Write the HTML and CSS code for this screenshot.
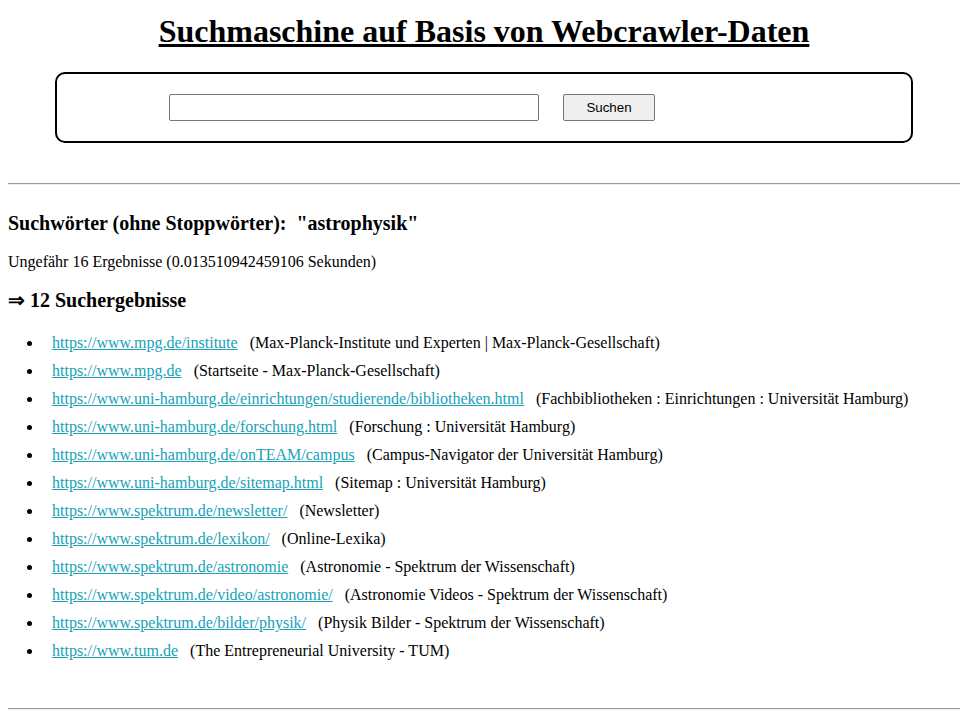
FILE: index.html
```html
<!DOCTYPE html>
<html lang="de">
<head>
<meta charset="utf-8">
<title>Suchmaschine</title>
<link rel="stylesheet" href="styles.css">
</head>
<body>
<h1 class="title">Suchmaschine auf Basis von Webcrawler-Daten</h1>
<form class="search-box">
  <input class="search-input" type="text">
  <button class="search-btn" type="button">Suchen</button>
</form>
<hr class="rule rule-top">
<h3 class="heading heading-first">Suchwörter (ohne Stoppwörter):&nbsp; "astrophysik"</h3>
<p class="stats">Ungefähr 16 Ergebnisse (0.013510942459106 Sekunden)</p>
<h3 class="heading">⇒ 12 Suchergebnisse</h3>
<ul class="results">
  <li><a href="#">https://www.mpg.de/institute</a>&nbsp;&nbsp; (Max-Planck-Institute und Experten | Max-Planck-Gesellschaft)</li>
  <li><a href="#">https://www.mpg.de</a>&nbsp;&nbsp; (Startseite - Max-Planck-Gesellschaft)</li>
  <li><a href="#">https://www.uni-hamburg.de/einrichtungen/studierende/bibliotheken.html</a>&nbsp;&nbsp; (Fachbibliotheken : Einrichtungen : Universität Hamburg)</li>
  <li><a href="#">https://www.uni-hamburg.de/forschung.html</a>&nbsp;&nbsp; (Forschung : Universität Hamburg)</li>
  <li><a href="#">https://www.uni-hamburg.de/onTEAM/campus</a>&nbsp;&nbsp; (Campus-Navigator der Universität Hamburg)</li>
  <li><a href="#">https://www.uni-hamburg.de/sitemap.html</a>&nbsp;&nbsp; (Sitemap : Universität Hamburg)</li>
  <li><a href="#">https://www.spektrum.de/newsletter/</a>&nbsp;&nbsp; (Newsletter)</li>
  <li><a href="#">https://www.spektrum.de/lexikon/</a>&nbsp;&nbsp; (Online-Lexika)</li>
  <li><a href="#">https://www.spektrum.de/astronomie</a>&nbsp;&nbsp; (Astronomie - Spektrum der Wissenschaft)</li>
  <li><a href="#">https://www.spektrum.de/video/astronomie/</a>&nbsp;&nbsp; (Astronomie Videos - Spektrum der Wissenschaft)</li>
  <li><a href="#">https://www.spektrum.de/bilder/physik/</a>&nbsp;&nbsp; (Physik Bilder - Spektrum der Wissenschaft)</li>
  <li><a href="#">https://www.tum.de</a>&nbsp;&nbsp; (The Entrepreneurial University - TUM)</li>
</ul>
<hr class="rule rule-bottom">
</body>
</html>
```
FILE: styles.css
```css
body {
  margin: 8px 4px 8px 8px;
  font-family: "Liberation Serif", "Times New Roman", serif;
  font-size: 16px;
  color: #000;
  background: #fff;
}
.title {
  margin: 5px 0 0 0;
  text-align: center;
  font-size: 32px;
  font-weight: bold;
  text-decoration: underline;
  line-height: 37px;
}
.search-box {
  display: flex;
  align-items: center;
  gap: 24px;
  margin: 22px 47px 0 47px;
  padding: 20px 20px 20px 112px;
  border: 2px solid #000;
  border-radius: 10px;
}
.search-input {
  width: 370px;
  height: 27px;
  box-sizing: border-box;
  border: 1px solid #767676;
  border-radius: 2px;
  margin: 0;
  padding: 1px 2px;
}
.search-btn {
  width: 92px;
  height: 27px;
  box-sizing: border-box;
  margin: 0;
  font-family: "Liberation Sans", Arial, sans-serif;
  font-size: 13.33px;
  background: #efefef;
  border: 1px solid #767676;
  border-radius: 2px;
  color: #000;
}
.rule {
  border: none;
  border-top: 1px solid #9a9a9a;
  border-bottom: 1px solid #eeeeee;
  margin: 0;
}
.rule-top {
  margin-top: 40px;
}
.heading {
  font-size: 20px;
  font-weight: bold;
  line-height: 23px;
  margin: 18px 0;
}
.heading-first {
  margin-top: 27px;
}
.stats {
  margin: 18px 0;
  line-height: 18px;
}
.results {
  margin: 22px 0 0 0;
  padding-left: 35px;
}
.results li {
  line-height: 18px;
  margin-bottom: 10px;
  padding-left: 9px;
}
.results a {
  color: #17a2b8;
}
.rule-bottom {
  margin-top: 48px;
}
```
